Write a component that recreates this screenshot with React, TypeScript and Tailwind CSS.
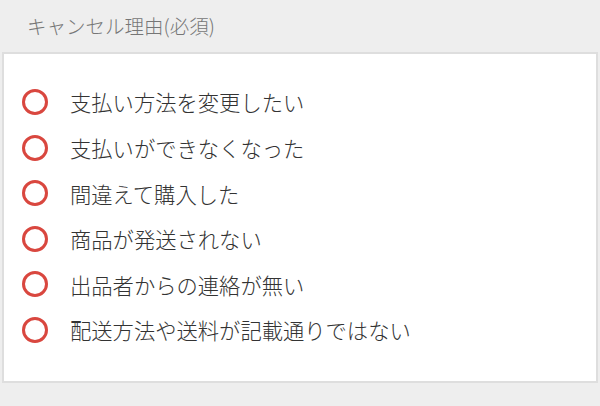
const reasons = [
  "支払い方法を変更したい",
  "支払いができなくなった",
  "間違えて購入した",
  "商品が発送されない",
  "出品者からの連絡が無い",
  "配送方法や送料が記載通りではない",
];

const App: React.FC = () => {
  return (
    <div
      className="w-[600px] h-[406px] bg-[#eeeeee] overflow-hidden"
      style={{ fontFamily: '"Noto Sans CJK JP", "Noto Sans", sans-serif' }}
    >
      <div className="h-[52px] pl-[27px] flex items-center text-[19.5px] text-[#767676] font-light">
        キャンセル理由(必須)
      </div>
      <div className="mx-[2px] h-[331px] bg-white border-2 border-[#dedede] pt-[35px] pl-[18px]">
        <ul className="flex flex-col gap-[19.6px]">
          {reasons.map((r) => (
            <li key={r} className="flex items-center h-[26px]">
              <span className="w-[26px] h-[26px] rounded-full border-[3px] border-[#d9473f] shrink-0" />
              <span className="ml-[22px] text-[21.3px] text-[#333333] font-light leading-none">{r}</span>
            </li>
          ))}
        </ul>
      </div>
    </div>
  );
};

export default App;
